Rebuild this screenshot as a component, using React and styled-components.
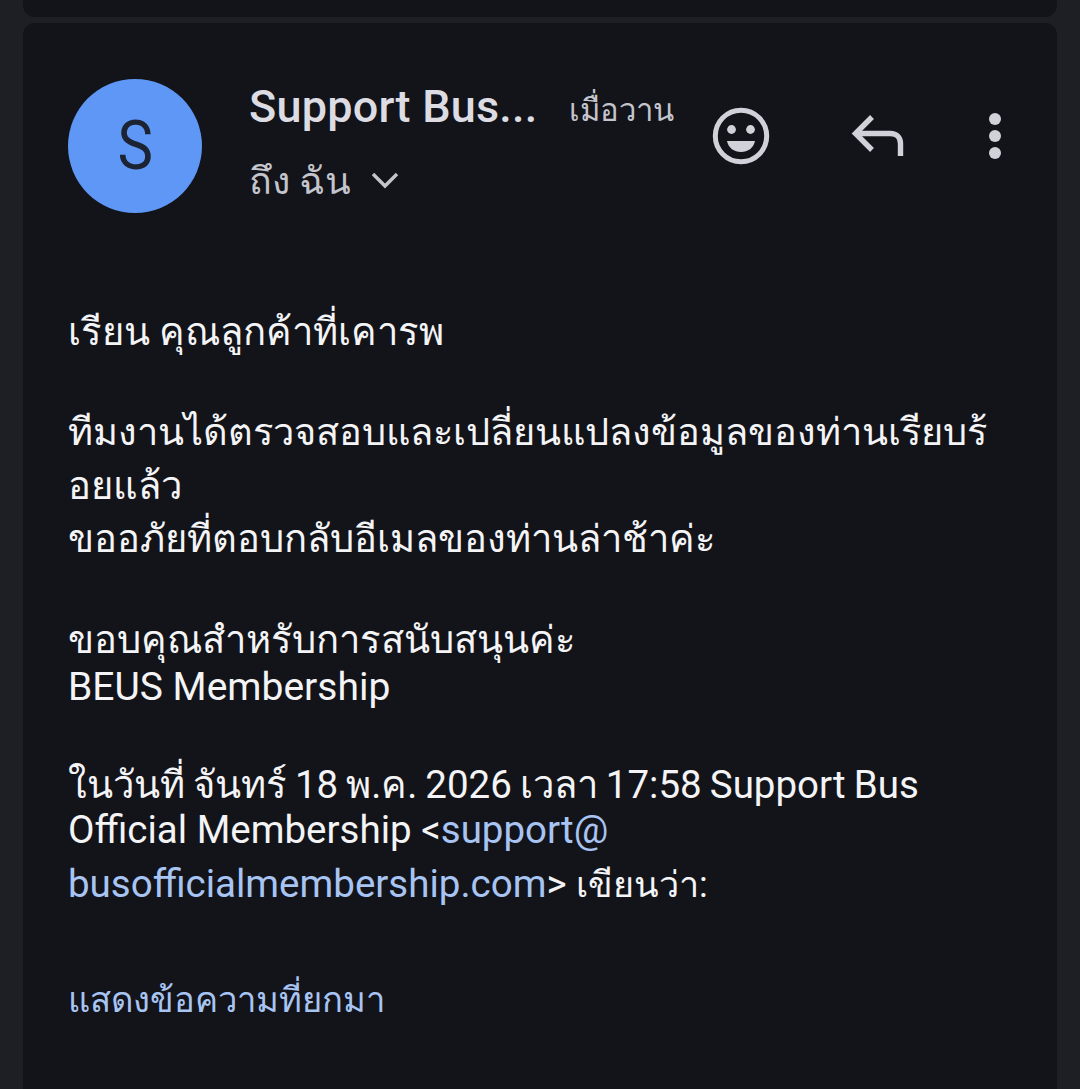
import React from "react";
import styled, { createGlobalStyle } from "styled-components";

const GlobalStyle = createGlobalStyle`
    html, body {
        margin: 0;
        padding: 0;
        background: #1e1f24;
        height: 1089px;
        overflow: hidden;
        font-family: Roboto, "Noto Sans", "DejaVu Sans", sans-serif;
    }
`;

const Page = styled.div`
    display: flex;
    flex-direction: column;
    gap: 6px;
    padding: 0 23px;
    height: 1089px;
    box-sizing: border-box;
    overflow: hidden;
`;

const PrevCard = styled.div`
    height: 17px;
    flex: none;
    background: #13141a;
    border-radius: 0 0 12px 12px;
`;

const MailCard = styled.div`
    flex: 1;
    background: #13141a;
    border-radius: 12px 12px 0 0;
    padding: 56px 45px 0;
`;

const Header = styled.header`
    display: flex;
    align-items: flex-start;
`;

const Avatar = styled.div`
    width: 134px;
    height: 134px;
    flex: none;
    border-radius: 50%;
    background: #5e97f6;
    color: #1c2433;
    font-size: 68px;
    display: flex;
    align-items: center;
    justify-content: center;
`;

const AvatarLetter = styled.span`
    display: block;
    transform: scaleX(0.88);
`;

const Meta = styled.div`
    margin-left: 47px;
    width: 425px;
    flex: none;
`;

const TopLine = styled.div`
    display: flex;
    align-items: baseline;
    justify-content: space-between;
`;

const Sender = styled.span`
    font-size: 45px;
    line-height: 56px;
    font-weight: 500;
    letter-spacing: 0.2px;
    color: #dcdce2;
`;

const When = styled.span`
    font-size: 31px;
    color: #c4c5cc;
    position: relative;
    top: -1px;
`;

const Recipient = styled.div`
    display: flex;
    align-items: center;
    gap: 19px;
    margin-top: 22px;
    font-size: 37.5px;
    line-height: 46px;
    color: #c4c5cc;
`;

const Actions = styled.div`
    display: flex;
    align-items: center;
    margin-left: 38px;
    margin-top: 28px;
    color: #d0d1d9;
`;

const IconSlot = styled.span`
    display: flex;
    margin-left: ${(props) => props.$gap || 0}px;
`;

const Body = styled.div`
    margin-top: 97px;
    width: 940px;
    font-size: 38.2px;
    line-height: 45px;
    color: #f4f4f6;
`;

const Line = styled.div`
    margin-top: ${(props) => props.$gap || 0}px;
    white-space: nowrap;
    word-spacing: ${(props) => props.$tight || 0}px;
    ${(props) => props.$size && `font-size: ${props.$size}px;`}
`;

const Run = styled.span`
    font-size: ${(props) => props.$size || 38.5}px;
`;

const MailLink = styled.span`
    color: #a8c4f2;
`;

const QuoteToggle = styled.div`
    margin-top: 70px;
    font-size: 34.6px;
    color: #a8c4f2;
`;

const Chevron = () => (
    <svg width="30" height="20" viewBox="0 0 30 20" fill="none" stroke="currentColor" strokeWidth="3.4">
        <path d="M3 3l12 12L27 3" />
    </svg>
);

const Smiley = () => (
    <svg width="58" height="58" viewBox="0 0 58 58">
        <circle cx="29" cy="29" r="25.700" fill="none" stroke="currentColor" strokeWidth="5" />
        <circle cx="19.500" cy="22.500" r="4.400" fill="currentColor" />
        <circle cx="38.500" cy="22.500" r="4.400" fill="currentColor" />
        <path d="M15 34h28c-1.500 7-7 11-14 11s-12.500-4-14-11z" fill="currentColor" />
    </svg>
);

const Reply = () => (
    <svg width="54" height="44" viewBox="0 0 54 44" fill="none" stroke="currentColor" strokeWidth="5.4">
        <path d="M21 3L4.500 19.500 21 36" />
        <path d="M4.500 19.500h35c6 0 10 4 10 10V42" />
    </svg>
);

const Dots = () => (
    <svg width="14" height="48" viewBox="0 0 14 48" fill="currentColor">
        <circle cx="7" cy="7" r="6" />
        <circle cx="7" cy="24" r="6" />
        <circle cx="7" cy="41" r="6" />
    </svg>
);

const App = () => (
    <Page>
        <GlobalStyle />
        <PrevCard />
        <MailCard>
            <Header>
                <Avatar><AvatarLetter>S</AvatarLetter></Avatar>
                <Meta>
                    <TopLine>
                        <Sender>Support Bus...</Sender>
                        <When>เมื่อวาน</When>
                    </TopLine>
                    <Recipient>
                        ถึง ฉัน
                        <Chevron />
                    </Recipient>
                </Meta>
                <Actions>
                    <IconSlot><Smiley /></IconSlot>
                    <IconSlot $gap={81}><Reply /></IconSlot>
                    <IconSlot $gap={83}><Dots /></IconSlot>
                </Actions>
            </Header>
            <Body>
                <Line>เรียน คุณลูกค้าที่เคารพ</Line>
                <Line $gap={55} $size={38}>ทีมงานได้ตรวจสอบและเปลี่ยนแปลงข้อมูลของท่านเรียบร้</Line>
                <Line $gap={9}>อยแล้ว</Line>
                <Line $gap={8}>ขออภัยที่ตอบกลับอีเมลของท่านล่าช้าค่ะ</Line>
                <Line $gap={56}>ขอบคุณสำหรับการสนับสนุนค่ะ</Line>
                <Line $gap={2}><Run $size={39}>BEUS Membership</Run></Line>
                <Line $gap={52} $tight={-1.5}>ในวันที่ จันทร์ <Run>18</Run> พ.ค. <Run>2026</Run> เวลา <Run>17:58 Support Bus</Run></Line>
                <Line $gap={-1}><Run>Official Membership &lt;<MailLink>support@</MailLink></Run></Line>
                <Line $gap={8}><Run><MailLink>busofficialmembership.com</MailLink>&gt;</Run> <Run $size={36}>เขียนว่า:</Run></Line>
                <QuoteToggle>แสดงข้อความที่ยกมา</QuoteToggle>
            </Body>
        </MailCard>
    </Page>
);

export default App;
